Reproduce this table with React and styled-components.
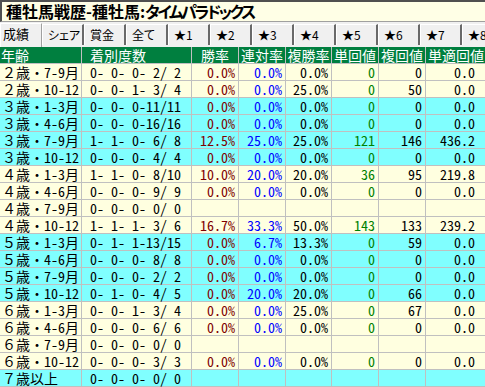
import React from 'react';
import styled, { createGlobalStyle } from 'styled-components';

const Global = createGlobalStyle`
  html, body { margin: 0; padding: 0; background: #f0f0f0; }
  body { font-family: "Noto Sans CJK JP", sans-serif; }
`;

const MONO = `"Noto Sans Mono CJK JP", "Noto Sans CJK JP", "Liberation Mono", monospace`;
const COLS = '82px 110px 47px 47px 46px 47px 47px 60px';

const Page = styled.div`
  width: 485px;
  height: 387px;
  overflow: hidden;
  background: #f0f0f0;
  display: flex;
  flex-direction: column;
`;

const TitleBox = styled.div`
  height: 22px;
  flex: none;
  box-sizing: border-box;
  margin-right: -10px;
  border-top: 2px solid #505050;
  border-left: 2px solid #505050;
  border-bottom: 1px solid #a0a0a0;
  background: #ffffe6;
  padding-left: 4px;
  font-weight: 700;
  font-size: 16px;
  line-height: 19px;
  color: #000;
  font-feature-settings: "palt";
  white-space: nowrap;
`;

const Kana = styled.span`
  letter-spacing: -2.4px;
`;

const TabStrip = styled.div`
  height: 25px;
  flex: none;
  display: flex;
  align-items: flex-end;
  white-space: nowrap;
`;

const Tab = styled.div`
  flex: none;
  width: 42px;
  box-sizing: border-box;
  height: ${p => (p.$active ? '24px' : '21px')};
  margin-bottom: ${p => (p.$active ? '0' : '2px')};
  padding-left: ${p => (p.$active ? '2px' : '5px')};
  font-size: ${p => (p.$active ? '13px' : '12px')};
  font-feature-settings: "palt";
  line-height: 20px;
  color: #000;
  background: #f0f0f0;
  border-left: 1px solid #ffffff;
  border-top: 1px solid #ffffff;
  border-right: ${p => (p.$active ? '1px solid #a0a0a0' : '2px solid #696969')};
`;

const Table = styled.div`
  display: flex;
  flex-direction: column;
`;

const HeadRow = styled.div`
  display: grid;
  grid-template-columns: ${COLS};
  height: 17px;
  flex: none;
  background: #007f3f;
`;

const HeadCell = styled.div`
  box-sizing: border-box;
  border-right: 1px solid #c0c0c0;
  border-bottom: 1px solid #c0c0c0;
  color: #fff;
  font-size: 14px;
  line-height: 16px;
  text-align: ${p => p.$align || 'center'};
  padding-left: ${p => p.$pl || 0}px;
  white-space: nowrap;
`;

const Row = styled.div`
  display: grid;
  grid-template-columns: ${COLS};
  height: 17px;
  flex: none;
  background: ${p => (p.$cyan ? '#80ffff' : '#ffffe0')};
`;

const Cell = styled.div`
  box-sizing: border-box;
  border-right: 1px solid #c0c0c0;
  border-bottom: 1px solid #c0c0c0;
  font-family: ${MONO};
  font-size: 14px;
  line-height: 16px;
  white-space: pre;
  color: ${p => p.$color || '#000'};
  text-align: ${p => p.$align || 'right'};
  padding-left: ${p => p.$pl || 0}px;
  padding-right: ${p => p.$pr || 0}px;
`;

const heads = [
  { t: '年齢', align: 'left', pl: 1 },
  { t: '着別度数', align: 'left', pl: 8 },
  { t: '勝率' },
  { t: '連対率' },
  { t: '複勝率' },
  { t: '単回値' },
  { t: '複回値' },
  { t: '単適回値', align: 'left', pl: 2 },
];

const colStyle = [
  { align: 'left', pl: 2 },
  { align: 'left', pl: 8 },
  { color: '#800000', pr: 3 },
  { color: '#0000ff', pr: 3 },
  { color: '#000', pr: 3 },
  { color: '#008000', pr: 3 },
  { color: '#000', pr: 3 },
  { color: '#000', pr: 10 },
];

const rows = [
  ['２歳・7-9月', '0- 0- 0- 2/ 2', '0.0%', '0.0%', '0.0%', '0', '0', '0.0', 0],
  ['２歳・10-12', '0- 0- 1- 3/ 4', '0.0%', '0.0%', '25.0%', '0', '50', '0.0', 0],
  ['３歳・1-3月', '0- 0- 0-11/11', '0.0%', '0.0%', '0.0%', '0', '0', '0.0', 1],
  ['３歳・4-6月', '0- 0- 0-16/16', '0.0%', '0.0%', '0.0%', '0', '0', '0.0', 1],
  ['３歳・7-9月', '1- 1- 0- 6/ 8', '12.5%', '25.0%', '25.0%', '121', '146', '436.2', 1],
  ['３歳・10-12', '0- 0- 0- 4/ 4', '0.0%', '0.0%', '0.0%', '0', '0', '0.0', 1],
  ['４歳・1-3月', '1- 1- 0- 8/10', '10.0%', '20.0%', '20.0%', '36', '95', '219.8', 0],
  ['４歳・4-6月', '0- 0- 0- 9/ 9', '0.0%', '0.0%', '0.0%', '0', '0', '0.0', 0],
  ['４歳・7-9月', '0- 0- 0- 0/ 0', '', '', '', '', '', '', 0],
  ['４歳・10-12', '1- 1- 1- 3/ 6', '16.7%', '33.3%', '50.0%', '143', '133', '239.2', 0],
  ['５歳・1-3月', '0- 1- 1-13/15', '0.0%', '6.7%', '13.3%', '0', '59', '0.0', 1],
  ['５歳・4-6月', '0- 0- 0- 8/ 8', '0.0%', '0.0%', '0.0%', '0', '0', '0.0', 1],
  ['５歳・7-9月', '0- 0- 0- 2/ 2', '0.0%', '0.0%', '0.0%', '0', '0', '0.0', 1],
  ['５歳・10-12', '0- 1- 0- 4/ 5', '0.0%', '20.0%', '20.0%', '0', '66', '0.0', 1],
  ['６歳・1-3月', '0- 0- 1- 3/ 4', '0.0%', '0.0%', '25.0%', '0', '67', '0.0', 0],
  ['６歳・4-6月', '0- 0- 0- 6/ 6', '0.0%', '0.0%', '0.0%', '0', '0', '0.0', 0],
  ['６歳・7-9月', '0- 0- 0- 0/ 0', '', '', '', '', '', '', 0],
  ['６歳・10-12', '0- 0- 0- 3/ 3', '0.0%', '0.0%', '0.0%', '0', '0', '0.0', 0],
  ['７歳以上', '0- 0- 0- 0/ 0', '', '', '', '', '', '', 1],
];

const tabs = ['成績', 'シェア', '賞金', '全て', '★1', '★2', '★3', '★4', '★5', '★6', '★7', '★8'];

export default function App() {
  return (
    <Page>
      <Global />
      <TitleBox>
        種牡馬戦歴-種牡馬:<Kana>タイムパラドックス</Kana>
      </TitleBox>
      <TabStrip>
        {tabs.map((t, i) => (
          <Tab key={t} $active={i === 0}>{t}</Tab>
        ))}
      </TabStrip>
      <Table>
        <HeadRow>
          {heads.map(h => (
            <HeadCell key={h.t} $align={h.align} $pl={h.pl}>{h.t}</HeadCell>
          ))}
        </HeadRow>
        {rows.map((r, ri) => (
          <Row key={ri} $cyan={r[8] === 1}>
            {r.slice(0, 8).map((v, ci) => (
              <Cell
                key={ci}
                $align={colStyle[ci].align}
                $pl={colStyle[ci].pl}
                $pr={colStyle[ci].pr}
                $color={colStyle[ci].color}
              >
                {v}
              </Cell>
            ))}
          </Row>
        ))}
      </Table>
    </Page>
  );
}
